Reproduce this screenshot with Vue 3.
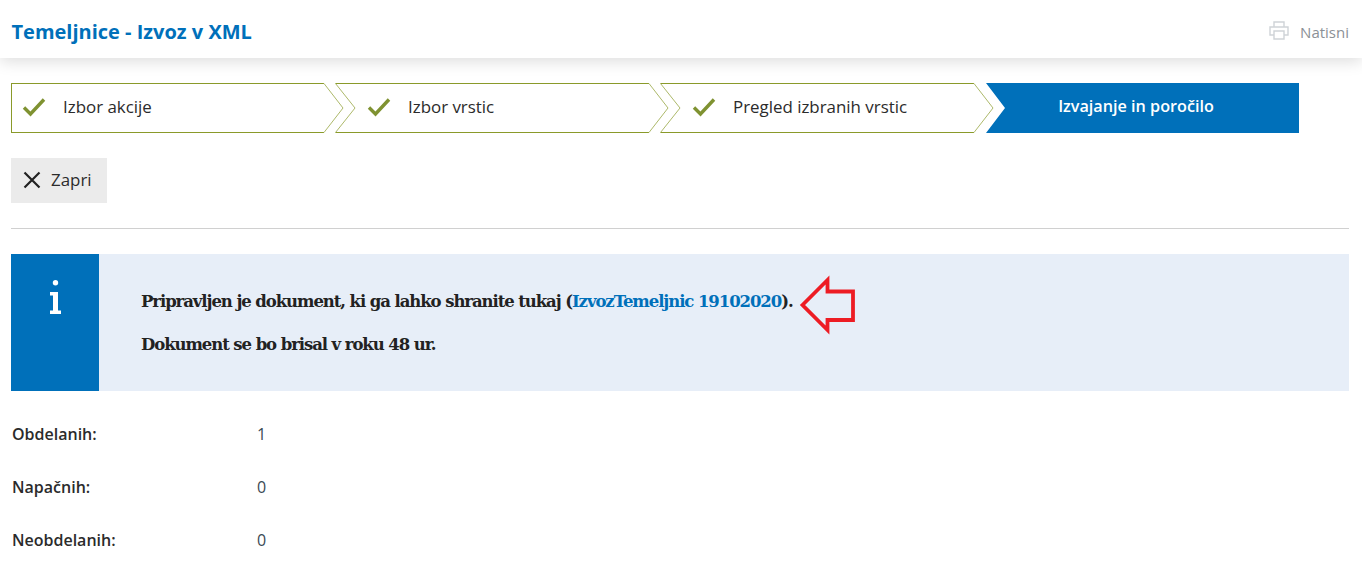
<template>
  <div class="page">
    <header class="topbar">
      <h1>Temeljnice - Izvoz v XML</h1>
      <a class="print">
        <svg width="20" height="19" viewBox="0 0 20 19" fill="none" stroke="#cfd3d7" stroke-width="1.4">
          <path d="M5 6V1h10v5" />
          <path d="M5 14H1V6h18v8h-4" />
          <path d="M5 10h10v8H5z" />
        </svg>
        Natisni
      </a>
    </header>

    <main class="content">
      <div class="steps">
        <div v-for="s in steps" :key="s.label" class="step" :class="{ active: s.active, first: s.first }">
          <svg v-if="!s.active" class="shape" width="333" height="50" viewBox="0 0 333 50" fill="none">
            <path :d="s.first ? 'M.5 .5H313' : 'M-.5 .5H313'" stroke="#8a9a2a" />
            <path :d="s.first ? 'M.5 49.5H313' : 'M-.5 49.5H313'" stroke="#8a9a2a" />
            <path v-if="s.first" d="M.5 0V50" stroke="#8a9a2a" />
            <path d="M313 .5 332 25 313 49.5" stroke="#adb96a" />
            <path v-if="!s.first" d="M-.5 .5 19 25-.5 49.5" stroke="#adb96a" />
          </svg>
          <svg v-if="!s.active" class="check" width="24" height="20" viewBox="0 0 24 20" fill="none">
            <path d="M2 10.5 8.5 17 22 2.5" stroke="#7f9231" stroke-width="3.4" />
          </svg>
          <span>{{ s.label }}</span>
        </div>
      </div>

      <button class="close">
        <svg width="18" height="18" viewBox="0 0 18 18" fill="none" stroke="#222" stroke-width="2.2">
          <path d="M1.5 1.5l15 15M16.5 1.5l-15 15" />
        </svg>
        Zapri
      </button>

      <hr />

      <section class="info">
        <div class="info-icon">
          <svg width="11" height="34" viewBox="0 0 11 34" fill="#fff">
            <circle cx="5.5" cy="2.8" r="2.7" />
            <path d="M0 12h8v18.6h3V34H0v-3.4h3V15.4H0z" />
          </svg>
        </div>
        <div class="info-text">
          <p>Pripravljen je dokument, ki ga lahko shranite tukaj (<a>IzvozTemeljnic 19102020</a>).</p>
          <p>Dokument se bo brisal v roku 48 ur.</p>
        </div>
        <svg class="arrow" width="60" height="60" viewBox="0 0 60 60" fill="none">
          <path d="M4.5 29 29.5 4V15.5H55V44H29.5V54Z" stroke="#ed1c24" stroke-width="3.8" />
        </svg>
      </section>

      <div class="stats">
        <div v-for="r in rows" :key="r.label" class="row">
          <strong>{{ r.label }}</strong>
          <span>{{ r.value }}</span>
        </div>
      </div>
    </main>
  </div>
</template>

<script setup>
const steps = [
  { label: 'Izbor akcije', first: true },
  { label: 'Izbor vrstic' },
  { label: 'Pregled izbranih vrstic' },
  { label: 'Izvajanje in poročilo', active: true }
]
const rows = [
  { label: 'Obdelanih:', value: 1 },
  { label: 'Napačnih:', value: 0 },
  { label: 'Neobdelanih:', value: 0 }
]
</script>

<style>
html, body { background: #fff; overflow: hidden; }
</style>

<style scoped>
.page { font-family: "Open Sans", sans-serif; color: #2b2b2b; font-size: 16px; }
.topbar { height: 58px; display: flex; align-items: center; justify-content: space-between; padding: 5px 13px 0 11.5px; box-sizing: border-box; background: #fff; box-shadow: 0 4px 14px rgba(0,0,0,0.13); position: relative; }
.topbar h1 { margin: 0; font-size: 20px; font-weight: 700; color: #0070ba; }
.print { display: flex; align-items: center; gap: 11px; color: #8b9096; font-size: 15px; margin-left: -3px; }
.print svg { margin-top: -2px; }
.content { padding: 25px 13px 0 11px; }
.steps { display: flex; height: 50px; }
.step { position: relative; width: 325px; display: flex; align-items: center; font-weight: 500; font-size: 16.9px; padding-left: 20px; box-sizing: border-box; }
.step.first { padding-left: 0; }
.step .shape { position: absolute; left: 0; top: 0; overflow: visible; }
.step .check { position: relative; margin: -3px 17px 0 11px; }
.step span { position: relative; top: -2px; }
.step.active { width: 313px; padding: 0 13px 0 0; background: #0070ba; color: #fff; font-size: 16.2px; font-weight: 600; justify-content: center; clip-path: polygon(0 0, 100% 0, 100% 100%, 0 100%, 19px 50%); }
.close { display: flex; align-items: center; gap: 10px; height: 45px; width: 96px; margin-top: 25px; padding: 0 0 2px 12px; background: #ebebeb; border: 0; font: inherit; font-size: 16.9px; font-weight: 500; color: #2b2b2b; }
hr { border: 0; border-top: 1px solid #d0d0d0; margin: 25px 0; }
.info { position: relative; display: flex; height: 137px; background: #e7eef8; }
.info-icon { width: 88px; background: #0070ba; display: flex; justify-content: center; padding-top: 26px; box-sizing: border-box; }
.info-text { padding: 37px 0 0 42px; font-family: "DejaVu Serif", serif; font-weight: 700; font-size: 16.5px; color: #222; letter-spacing: -1.08px; }
.info-text p { margin: 0 0 21px; line-height: 22px; }
.info-text a { color: #0070ba; }
.arrow { position: absolute; left: 787px; top: 22px; overflow: visible; }
.stats { margin-top: 24px; }
.row { display: flex; height: 53px; line-height: 38px; }
.row strong { width: 245px; margin-left: 1px; font-weight: 600; }
.row span { color: #3a4a55; }
</style>
